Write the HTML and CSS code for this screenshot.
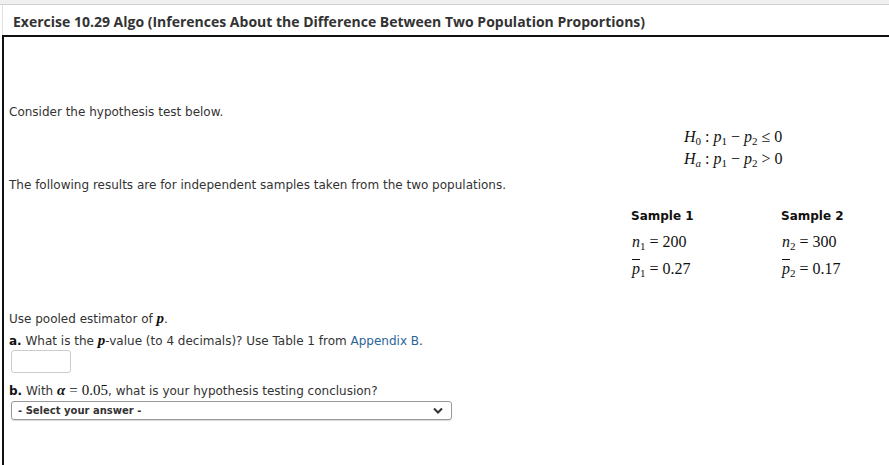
FILE: index.html
```html
<!DOCTYPE html>
<html lang="en">
<head>
    <meta charset="UTF-8">
    <link rel="stylesheet" href="styles.css">
    <title>Exercise 10.29 Algo</title>
</head>
<body>
    <div class="topbar"></div>
    <div class="header">
        <h1 class="title">Exercise 10.29 Algo (Inferences About the Difference Between Two Population Proportions)</h1>
    </div>
    <div class="question">
        <p class="intro">Consider the hypothesis test below.</p>
        <div class="hypotheses">
            <div class="math"><i>H</i><sub>0</sub><span class="op">:</span><i>p</i><sub>1</sub><span class="op">&minus;</span><i>p</i><sub>2</sub><span class="op">&le;</span>0</div>
            <div class="math"><i>H</i><sub><i>a</i></sub><span class="op">:</span><i>p</i><sub>1</sub><span class="op">&minus;</span><i>p</i><sub>2</sub><span class="op">&gt;</span>0</div>
        </div>
        <p class="results">The following results are for independent samples taken from the two populations.</p>
        <div class="samples">
            <div class="sample">
                <div class="sample-head">Sample 1</div>
                <div class="math"><i>n</i><sub>1</sub><span class="op">=</span>200</div>
                <div class="math"><i class="bar">p</i><sub>1</sub><span class="op">=</span>0.27</div>
            </div>
            <div class="sample">
                <div class="sample-head">Sample 2</div>
                <div class="math"><i>n</i><sub>2</sub><span class="op">=</span>300</div>
                <div class="math"><i class="bar">p</i><sub>2</sub><span class="op">=</span>0.17</div>
            </div>
        </div>
        <p class="line pooled">Use pooled estimator of <i class="mi">p</i>.</p>
        <p class="line"><b>a.</b> What is the <i class="mi">p</i>-value (to 4 decimals)? Use Table 1 from <a href="#" class="link">Appendix B</a>.</p>
        <div class="answer"></div>
        <p class="line part-b"><b>b.</b> With <i class="mi">&alpha;</i><span class="mn"><span class="op">=</span>0.05</span>, what is your hypothesis testing conclusion?</p>
        <div class="select">
            <span>- Select your answer -</span>
            <svg width="10" height="7" viewBox="0 0 10 7"><path d="M1 1.5 L5 5.5 L9 1.5" fill="none" stroke="#333" stroke-width="2"/></svg>
        </div>
    </div>
</body>
</html>
```

FILE: styles.css
```css
body {
    margin: 0;
    background-color: #fff;
    font-family: "DejaVu Sans", Verdana, sans-serif;
    font-size: 12px;
    color: #333;
}

.topbar {
    height: 4px;
    background-color: #f0f0f0;
    border-bottom: 1px solid #d0d0d0;
}

.header {
    margin-left: 2px;
    border-left: 1px solid #e0e0e0;
    display: flex;
    align-items: center;
    padding-top: 2px;
    box-sizing: border-box;
    height: 30px;
}

.title {
    margin: 0 0 0 10px;
    font-family: "Open Sans", sans-serif;
    font-size: 14px;
    font-weight: bold;
    color: #333;
}

.question {
    margin-left: 2px;
    border-top: 2px solid #111;
    border-left: 2px solid #111;
    padding: 68px 0 0 5px;
    min-height: 430px;
    box-sizing: border-box;
}

p {
    margin: 0;
}

.math {
    font-family: "Liberation Serif", "Times New Roman", serif;
    font-size: 16px;
    color: #111;
    line-height: 22px;
}

.math sub {
    font-size: 11px;
    vertical-align: -3px;
    line-height: 0;
}

.op {
    margin: 0 4px;
}

.bar {
    text-decoration: overline;
}

.hypotheses {
    margin: 7px 0 0 675px;
}

.results {
    margin-top: 8px;
}

.samples {
    display: flex;
    margin: 17px 0 0 622px;
}

.sample {
    width: 150px;
    flex-shrink: 0;
}

.sample-head {
    font-weight: bold;
    color: #111;
    margin-bottom: 5px;
}

.sample .math {
    line-height: 27px;
    margin-left: 1px;
}

.line {
    line-height: 21px;
}

.pooled {
    margin-top: 26px;
}

.line b {
    color: #111;
}

.mi {
    font-family: "Liberation Serif", serif;
    font-size: 15px;
    font-weight: bold;
    color: #111;
}

.mn {
    font-family: "Liberation Serif", serif;
    font-size: 15px;
    color: #111;
}

.link {
    color: #2a6496;
    text-decoration: none;
}

.answer {
    width: 60px;
    height: 23px;
    box-sizing: border-box;
    margin: -2px 0 0 2px;
    border: 1px solid #ccc;
    border-radius: 3px;
}

.part-b {
    margin-top: 7px;
}

.select {
    display: flex;
    align-items: center;
    justify-content: space-between;
    width: 441px;
    height: 19px;
    box-sizing: border-box;
    margin: -1px 0 0 2px;
    padding: 0 8px 0 6px;
    border: 1px solid #999;
    border-radius: 3px;
    box-shadow: 0 1px 1px rgba(0, 0, 0, 0.15);
    font-size: 10px;
    font-weight: bold;
    color: #333;
}
```
